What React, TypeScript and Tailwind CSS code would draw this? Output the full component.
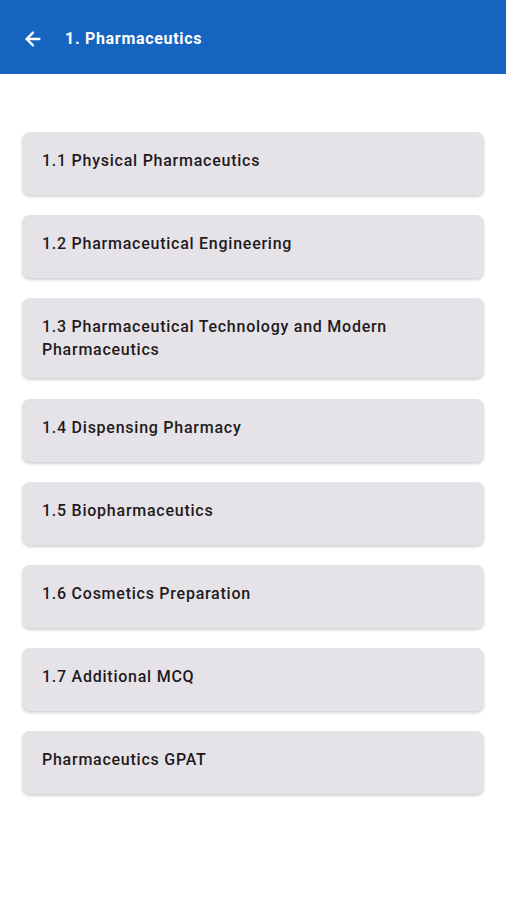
import { ArrowLeft } from "lucide-react";

const items = [
  "1.1 Physical Pharmaceutics",
  "1.2 Pharmaceutical Engineering",
  "1.3 Pharmaceutical Technology and Modern Pharmaceutics",
  "1.4 Dispensing Pharmacy",
  "1.5 Biopharmaceutics",
  "1.6 Cosmetics Preparation",
  "1.7 Additional MCQ",
  "Pharmaceutics GPAT",
];

export default function App() {
  return (
    <div className="min-h-[900px] bg-white font-['Roboto',sans-serif]">
      <header className="flex h-[74px] items-center bg-[#1565c0] px-[22px] pt-[4px] text-white">
        <ArrowLeft size={22} strokeWidth={2.5} />
        <h1 className="ml-[21px] text-[16px] font-bold tracking-[0.7px]">1. Pharmaceutics</h1>
      </header>
      <div className="flex flex-col gap-[20.2px] px-[22px] pt-[58px]">
        {items.map((item) => (
          <div
            key={item}
            className="min-h-[63px] rounded-[8px] bg-[#e6e3e8] pb-[17px] pl-[20px] pr-[60px] pt-[17px] text-[16px] font-medium leading-[23px] tracking-[0.75px] text-[#1e1b20] shadow-[0_2px_3px_rgba(0,0,0,0.18)]"
          >
            {item}
          </div>
        ))}
      </div>
    </div>
  );
}
